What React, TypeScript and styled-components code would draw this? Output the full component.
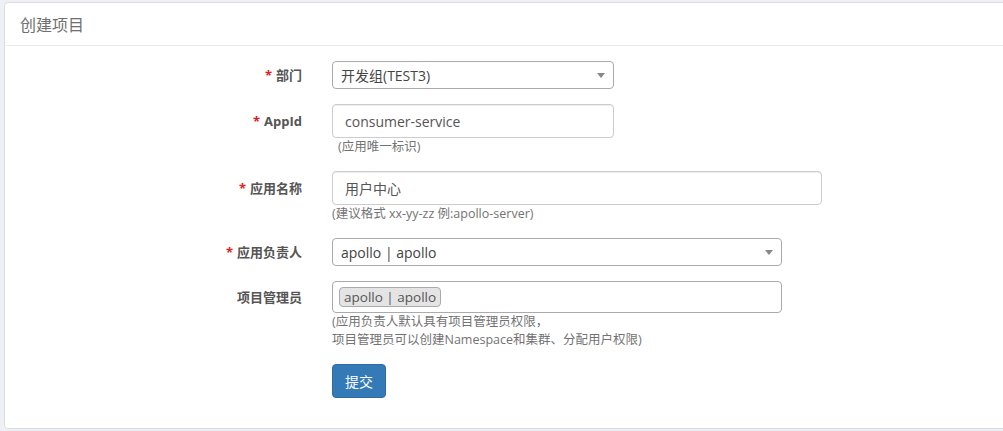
import React from "react";
import styled, { createGlobalStyle } from "styled-components";

const GlobalStyle = createGlobalStyle`
  html, body {
    margin: 0;
    padding: 0;
    background: #eef0f5;
    overflow: hidden;
  }
  body {
    font-family: "Open Sans", "Noto Sans CJK SC", sans-serif;
    font-size: 14px;
    color: #333;
  }
`;

const Page = styled.div`
  padding: 2px 0 0 4px;
`;

const Panel = styled.div`
  width: 1020px;
  background: #fff;
  border: 1px solid #dcdde2;
  border-radius: 4px;
  box-sizing: border-box;
`;

const PanelHeading = styled.div`
  display: flex;
  align-items: center;
  height: 42px;
  padding: 0 15px;
  border-bottom: 1px solid #ececec;
`;

const PanelTitle = styled.span`
  font-size: 16px;
  color: #6f6f6f;
`;

const PanelBody = styled.div`
  display: flex;
  flex-direction: column;
  gap: 15px;
  padding: 15px 0 30px;
`;

const FormRow = styled.div`
  display: grid;
  grid-template-columns: 297px 1fr;
  column-gap: 30px;
`;

const Label = styled.label<{ $h: number }>`
  text-align: right;
  font-size: 13px;
  font-weight: bold;
  color: #555;
  line-height: ${(p) => p.$h}px;
  white-space: nowrap;
`;

const Required = styled.span`
  color: #e02020;
  margin-right: 4px;
`;

const FieldCol = styled.div`
  display: flex;
  flex-direction: column;
`;

const SelectBox = styled.div<{ $w: number }>`
  position: relative;
  width: ${(p) => p.$w}px;
  height: 28px;
  box-sizing: border-box;
  border: 1px solid #aaa;
  border-radius: 4px;
  display: flex;
  align-items: center;
  padding: 0 24px 0 8px;
  font-size: 14px;
  color: #444;
`;

const Arrow = styled.span`
  position: absolute;
  right: 8px;
  top: 11px;
  width: 0;
  height: 0;
  border-left: 4px solid transparent;
  border-right: 4px solid transparent;
  border-top: 5px solid #888;
`;

const TextInput = styled.div<{ $w: number }>`
  width: ${(p) => p.$w}px;
  height: 34px;
  box-sizing: border-box;
  border: 1px solid #ccc;
  border-radius: 4px;
  display: flex;
  align-items: center;
  padding: 0 12px;
  font-size: 14px;
  color: #555;
  box-shadow: inset 0 1px 1px rgba(0, 0, 0, 0.075);
`;

const MultiSelect = styled.div<{ $w: number }>`
  width: ${(p) => p.$w}px;
  height: 32px;
  box-sizing: border-box;
  border: 1px solid #aaa;
  border-radius: 4px;
  display: flex;
  align-items: center;
  padding: 0 6px;
`;

const Tag = styled.span`
  display: inline-flex;
  align-items: center;
  height: 20px;
  box-sizing: border-box;
  padding: 0 4px;
  background: #e4e4e4;
  border: 1px solid #aaa;
  border-radius: 4px;
  font-size: 13.5px;
  color: #555;
`;

const Help = styled.div<{ $indent?: number }>`
  font-size: 12.5px;
  line-height: 18px;
  color: #737373;
  padding-left: ${(p) => p.$indent ?? 0}px;
`;

const SubmitButton = styled.button`
  width: 54px;
  height: 34px;
  background: #337ab7;
  border: 1px solid #2e6da4;
  border-radius: 4px;
  color: #fff;
  font-family: "Open Sans", "Noto Sans CJK SC", sans-serif;
  font-size: 14px;
  padding: 0;
  cursor: pointer;
`;

export default function App() {
  return (
    <>
      <GlobalStyle />
      <Page>
        <Panel>
          <PanelHeading>
            <PanelTitle>创建项目</PanelTitle>
          </PanelHeading>
          <PanelBody>
            <FormRow>
              <Label $h={28}>
                <Required>*</Required>部门
              </Label>
              <FieldCol>
                <SelectBox $w={282}>
                  开发组(TEST3)
                  <Arrow />
                </SelectBox>
              </FieldCol>
            </FormRow>

            <FormRow>
              <Label $h={34}>
                <Required>*</Required>AppId
              </Label>
              <FieldCol>
                <TextInput $w={282}>consumer-service</TextInput>
                <Help $indent={6}>(应用唯一标识)</Help>
              </FieldCol>
            </FormRow>

            <FormRow>
              <Label $h={34}>
                <Required>*</Required>应用名称
              </Label>
              <FieldCol>
                <TextInput $w={490}>用户中心</TextInput>
                <Help>(建议格式 xx-yy-zz 例:apollo-server)</Help>
              </FieldCol>
            </FormRow>

            <FormRow>
              <Label $h={28}>
                <Required>*</Required>应用负责人
              </Label>
              <FieldCol>
                <SelectBox $w={450}>
                  apollo | apollo
                  <Arrow />
                </SelectBox>
              </FieldCol>
            </FormRow>

            <FormRow>
              <Label $h={32}>项目管理员</Label>
              <FieldCol>
                <MultiSelect $w={450}>
                  <Tag>apollo | apollo</Tag>
                </MultiSelect>
                <Help>
                  (应用负责人默认具有项目管理员权限，
                  <br />
                  项目管理员可以创建Namespace和集群、分配用户权限)
                </Help>
              </FieldCol>
            </FormRow>

            <FormRow>
              <span />
              <FieldCol>
                <SubmitButton>提交</SubmitButton>
              </FieldCol>
            </FormRow>
          </PanelBody>
        </Panel>
      </Page>
    </>
  );
}
